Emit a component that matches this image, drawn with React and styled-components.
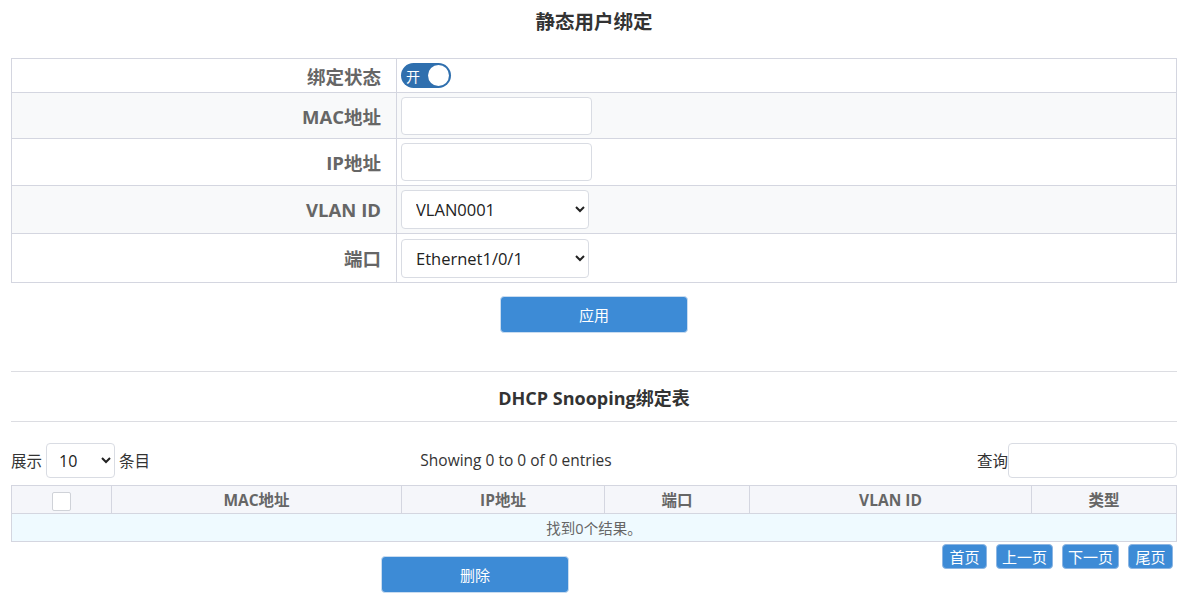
import React from 'react'
import styled, { createGlobalStyle } from 'styled-components'

const GlobalStyle = createGlobalStyle`
body {
    margin: 0;
    background: #fff;
    font-family: "Open Sans", "Noto Sans CJK SC", sans-serif;
    color: #333;
}`

const Page = styled.div`
padding: 0 13px 0 11px;
width: 1190px;
box-sizing: border-box;`

const Title = styled.h3`
margin: 0;
height: 58px;
padding-top: 6px;
box-sizing: border-box;
text-align: center;
font-size: 19.5px;
font-weight: bold;
color: #333;`

const FormTable = styled.div`
border: 1px solid #d4d6e0;
border-bottom: none;`

const FormRow = styled.div`
display: grid;
grid-template-columns: 385px 1fr;
box-sizing: border-box;
height: ${props => props.h}px;
background: ${props => props.alt ? '#f8f9fa' : '#fff'};
border-bottom: 1px solid #d4d6e0;`

const Label = styled.div`
display: flex;
align-items: center;
justify-content: flex-end;
padding-right: 15px;
border-right: 1px solid #d4d6e0;
font-size: 18.5px;
font-weight: bold;
color: #666;`

const Cell = styled.div`
display: flex;
align-items: center;
padding-left: 4px;`

const Toggle = styled.div`
width: 50px;
height: 25px;
border-radius: 13px;
background: #2f6fae;
display: flex;
align-items: center;
justify-content: space-between;
padding: 0 2px 0 5px;
box-sizing: border-box;
color: #fff;
font-size: 14px;`

const Knob = styled.span`
width: 21px;
height: 21px;
border-radius: 50%;
background: #fff;`

const TextInput = styled.input`
width: ${props => props.w || 191}px;
height: ${props => props.h || 38}px;
box-sizing: border-box;
border: 1px solid #d9dce3;
border-radius: 4px;
background: #fff;
font-family: inherit;`

const Select = styled.select`
width: ${props => props.w || 188}px;
height: ${props => props.h || 39}px;
box-sizing: border-box;
border: 1px solid #d9dce3;
border-radius: 4px;
background: #fff;
padding-left: ${props => props.pl || 10}px;
font-family: "Open Sans", sans-serif;
font-size: ${props => props.fs || 16.5}px;
color: #222;`

const BtnBar = styled.div`
display: flex;
justify-content: ${props => props.start ? 'flex-start' : 'center'};
padding: ${props => props.pad};`

const Button = styled.button`
width: 188px;
height: 37px;
border: 1px solid #c9dcf0;
border-radius: 4px;
background: #3d8bd6;
color: #fff;
font-family: inherit;
font-size: 15px;`

const Divider = styled.div`
border-top: 1px solid #dcdde2;
border-bottom: 1px solid #dcdde2;
height: 49px;
display: flex;
align-items: center;
justify-content: center;
font-size: 18px;
font-weight: bold;
color: #333;
margin-top: 38px;`

const Toolbar = styled.div`
display: grid;
grid-template-columns: 300px 410px 1fr;
align-items: center;
height: 35px;
margin: 21px 0 7px;
font-size: 15.5px;`

const Left = styled.div`
display: flex;
align-items: center;
gap: 4px;`

const Center = styled.div`
text-align: center;
margin-top: -2px;`

const Right = styled.div`
display: flex;
align-items: center;
justify-content: flex-end;`

const Grid = styled.table`
width: 100%;
table-layout: fixed;
border-collapse: collapse;
font-size: 14.5px;`

const Th = styled.th`
height: 27px;
padding: 0;
border: 1px solid #d4d6e0;
background: #f5f6fa;
color: #666;
font-size: 15.5px;
font-weight: bold;
width: ${props => props.w ? props.w + 'px' : 'auto'};`

const Td = styled.td`
height: 27px;
padding: 0;
border: 1px solid #d4d6e0;
background: #effaff;
color: #666;
text-align: center;`

const Check = styled.span`
display: inline-block;
width: 17px;
height: 17px;
border: 1px solid #cfd2d8;
border-radius: 2px;
background: #fff;
vertical-align: middle;`

const Bottom = styled.div`
display: grid;
grid-template-columns: 1fr auto;
align-items: start;`

const Pager = styled.div`
display: flex;
gap: 9px;
padding: 2px 4px 0 0;`

const PageBtn = styled.span`
height: 25px;
min-width: 45px;
padding: 0 5px;
display: flex;
align-items: center;
justify-content: center;
box-sizing: border-box;
border-radius: 4px;
border: 1px solid #8db6e3;
background: #3d8bd6;
color: #fff;
font-size: 15px;`

const App = () => {
    return (
        <Page>
            <GlobalStyle />
            <Title>静态用户绑定</Title>
            <FormTable>
                <FormRow h={34}>
                    <Label>绑定状态</Label>
                    <Cell><Toggle>开<Knob /></Toggle></Cell>
                </FormRow>
                <FormRow h={46} alt>
                    <Label>MAC地址</Label>
                    <Cell><TextInput /></Cell>
                </FormRow>
                <FormRow h={47}>
                    <Label>IP地址</Label>
                    <Cell><TextInput /></Cell>
                </FormRow>
                <FormRow h={48} alt>
                    <Label>VLAN ID</Label>
                    <Cell><Select><option>VLAN0001</option></Select></Cell>
                </FormRow>
                <FormRow h={49}>
                    <Label>端口</Label>
                    <Cell><Select><option>Ethernet1/0/1</option></Select></Cell>
                </FormRow>
            </FormTable>
            <BtnBar pad="13px 0 0 0"><Button>应用</Button></BtnBar>
            <Divider>DHCP Snooping绑定表</Divider>
            <Toolbar>
                <Left>
                    展示
                    <Select w={69} h={35} pl={8} fs={16}><option>10</option></Select>
                    条目
                </Left>
                <Center>Showing 0 to 0 of 0 entries</Center>
                <Right>
                    查询
                    <TextInput w={169} h={35} />
                </Right>
            </Toolbar>
            <Grid>
                <thead>
                    <tr>
                        <Th w={99}><Check /></Th>
                        <Th w={289}>MAC地址</Th>
                        <Th w={202}>IP地址</Th>
                        <Th w={144}>端口</Th>
                        <Th w={281}>VLAN ID</Th>
                        <Th>类型</Th>
                    </tr>
                </thead>
                <tbody>
                    <tr><Td colSpan={6}>找到0个结果。</Td></tr>
                </tbody>
            </Grid>
            <Bottom>
                <BtnBar start pad="14px 0 0 370px"><Button>删除</Button></BtnBar>
                <Pager>
                    <PageBtn>首页</PageBtn>
                    <PageBtn>上一页</PageBtn>
                    <PageBtn>下一页</PageBtn>
                    <PageBtn>尾页</PageBtn>
                </Pager>
            </Bottom>
        </Page>
    )
}

export default App
